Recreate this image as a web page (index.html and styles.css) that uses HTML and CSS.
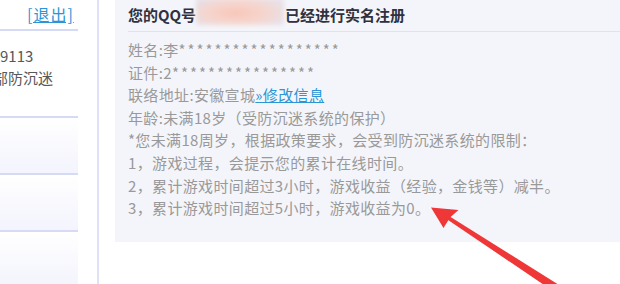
FILE: index.html
```html
<!DOCTYPE html>
<html lang="zh-CN">
<head>
<meta charset="utf-8">
<title>实名注册</title>
<link rel="stylesheet" href="styles.css">
</head>
<body>
<div class="page">
  <aside class="side">
    <div class="side-top"><a class="logout" href="#">[退出]</a></div>
    <div class="side-info">
      <p class="info-line">9113</p>
      <p class="info-line info-cut">部防沉迷</p>
    </div>
    <div class="side-row"></div>
    <div class="side-row"></div>
    <div class="side-row"></div>
  </aside>
  <div class="divider"></div>
  <main class="main">
    <section class="panel">
      <h2 class="panel-title">您的QQ号<span class="masked"></span>已经进行实名注册</h2>
      <div class="panel-body">
        <p class="line">姓名:李<span class="stars">******************</span></p>
        <p class="line">证件:2<span class="stars">****************</span></p>
        <p class="line">联络地址:安徽宣城<a class="edit" href="#">»修改信息</a></p>
        <p class="line">年龄:未满18岁（受防沉迷系统的保护）</p>
        <p class="line">*您未满18周岁，根据政策要求，会受到防沉迷系统的限制：</p>
        <p class="line">1，游戏过程，会提示您的累计在线时间。</p>
        <p class="line">2，累计游戏时间超过3小时，游戏收益（经验，金钱等）减半。</p>
        <p class="line">3，累计游戏时间超过5小时，游戏收益为0。</p>
      </div>
    </section>
  </main>
  <svg class="arrow" width="620" height="284" viewBox="0 0 620 284" aria-hidden="true">
    <polygon fill="#ef3737" points="446.2,218.8 448.2,215.4 558.4,284.6 553.6,291.4"/>
    <polygon fill="#ef3737" points="431,207.5 458.5,210 450,217.5 443.5,228"/>
  </svg>
</div>
</body>
</html>
```

FILE: styles.css
```css
html, body {
  margin: 0;
  padding: 0;
  background: #ffffff;
}

.page {
  position: relative;
  display: flex;
  width: 620px;
  height: 284px;
  overflow: hidden;
  font-family: "Noto Sans CJK SC", "Noto Sans", sans-serif;
}

.side {
  width: 78px;
  flex: none;
  margin-right: 19px;
  overflow: hidden;
}

.side-top {
  height: 31px;
  border-bottom: 2px solid #d6dbf5;
  box-sizing: border-box;
  padding: 2px 0 0 27px;
}

.logout {
  font-size: 16px;
  line-height: 22px;
  letter-spacing: 1px;
  color: #2b95d6;
  text-decoration: underline;
  white-space: nowrap;
}

.side-info {
  height: 87px;
  border-bottom: 2px solid #d6dbf5;
  box-sizing: border-box;
  overflow: hidden;
  padding-top: 14px;
}

.info-line {
  margin: 0;
  font-size: 15px;
  line-height: 22px;
  color: #585858;
  white-space: nowrap;
}

.info-cut {
  margin-left: -7px;
}

.side-row {
  height: 57px;
  border-bottom: 2px solid #d6dbf5;
  box-sizing: border-box;
  background: linear-gradient(to bottom, #ffffff, #f3f4fd);
}

.divider {
  width: 2px;
  flex: none;
  background: #dfe2f7;
  margin-right: 16px;
}

.main {
  flex: 1;
  min-width: 0;
}

.panel {
  height: 242px;
  background: #f4f5fa;
  padding-left: 13px;
  box-sizing: border-box;
}

.panel-title {
  margin: 0;
  height: 32px;
  box-sizing: border-box;
  border-bottom: 1px solid #e1e2ea;
  font-size: 15px;
  line-height: 30px;
  font-weight: bold;
  color: #2f3140;
  white-space: nowrap;
}

.masked {
  display: inline-block;
  width: 88px;
  height: 27px;
  vertical-align: top;
  margin-top: -2px;
  margin-right: 1px;
  border-radius: 4px;
  background:
    radial-gradient(ellipse at 45% 55%, #f8c6b8 0%, #f6d4cc 40%, rgba(236,230,236,0) 78%),
    linear-gradient(to right, #e4e0e8, #f3dcd8 50%, #e6e1e9);
  filter: blur(2px);
}

.panel-body {
  padding-top: 7px;
}

.line {
  margin: 0;
  font-size: 15px;
  line-height: 22.6px;
  letter-spacing: 0.35px;
  color: #999999;
  white-space: nowrap;
}

.stars {
  letter-spacing: 2px;
}

.edit {
  color: #2b95d6;
  text-decoration: underline;
}

.arrow {
  position: absolute;
  left: 0;
  top: 0;
  pointer-events: none;
}
```
